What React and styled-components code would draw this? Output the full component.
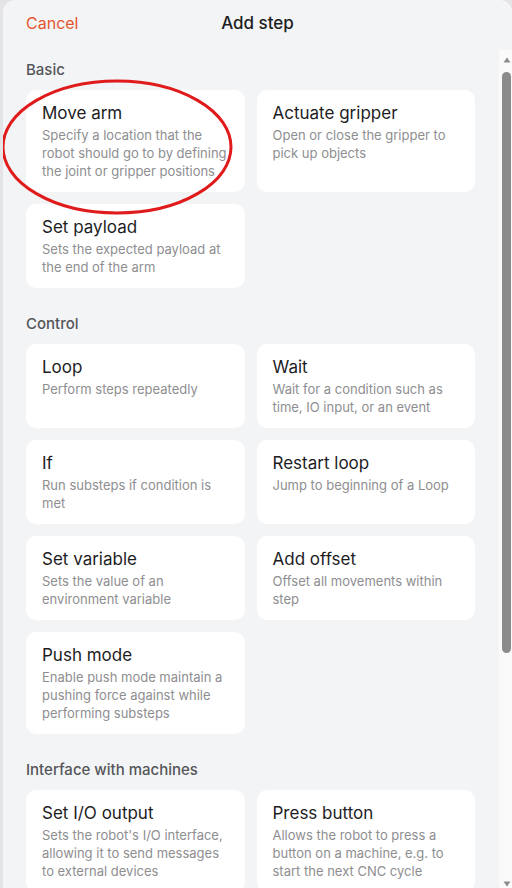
import styled, { createGlobalStyle } from 'styled-components';

const GlobalStyle = createGlobalStyle`
  * { box-sizing: border-box; }
  html, body { margin: 0; padding: 0; }
  body {
    background: #e4e4e6;
    font-family: Inter, "Noto Sans", sans-serif;
    -webkit-font-smoothing: antialiased;
  }
`;

const sections = [
  {
    label: 'Basic',
    steps: [
      { title: 'Move arm', text: 'Specify a location that the robot should go to by defining the joint or gripper positions' },
      { title: 'Actuate gripper', text: 'Open or close the gripper to pick up objects' },
      { title: 'Set payload', text: 'Sets the expected payload at the end of the arm' },
    ],
  },
  {
    label: 'Control',
    steps: [
      { title: 'Loop', text: 'Perform steps repeatedly' },
      { title: 'Wait', text: 'Wait for a condition such as time, IO input, or an event' },
      { title: 'If', text: 'Run substeps if condition is met' },
      { title: 'Restart loop', text: 'Jump to beginning of a Loop' },
      { title: 'Set variable', text: 'Sets the value of an environment variable' },
      { title: 'Add offset', text: 'Offset all movements within step' },
      { title: 'Push mode', text: 'Enable push mode maintain a pushing force against while performing substeps' },
    ],
  },
  {
    label: 'Interface with machines',
    steps: [
      { title: 'Set I/O output', text: "Sets the robot's I/O interface, allowing it to send messages to external devices" },
      { title: 'Press button', text: 'Allows the robot to press a button on a machine, e.g. to start the next CNC cycle' },
    ],
  },
];

function Scrollbar() {
  return (
    <Track>
      <Arrow viewBox='0 0 8 6' $dir='up'>
        <path d='M4 0.5 L7.5 5.5 L0.5 5.5 Z' fill='#8b8b8b' />
      </Arrow>
      <Thumb />
      <Arrow viewBox='0 0 8 6' $dir='down'>
        <path d='M0.5 0.5 L7.5 0.5 L4 5.5 Z' fill='#8b8b8b' />
      </Arrow>
    </Track>
  );
}

function Sheet() {
  return (
    <Panel>
      <Header>
        <CancelButton type='button'>Cancel</CancelButton>
        <Title>Add step</Title>
        <span />
      </Header>
      <BodyRow>
        <Scroller>
          {sections.map((section) => (
            <Section key={section.label}>
              <SectionLabel>{section.label}</SectionLabel>
              <Grid>
                {section.steps.map((step) => (
                  <Card key={step.title}>
                    <CardTitle>{step.title}</CardTitle>
                    <CardText>{step.text}</CardText>
                  </Card>
                ))}
              </Grid>
            </Section>
          ))}
        </Scroller>
        <Scrollbar />
      </BodyRow>
      <Highlight width='236' height='140' viewBox='0 0 236 140'>
        <ellipse cx='117' cy='69' rx='114' ry='66' fill='none' stroke='#e01b1b' strokeWidth='3' />
      </Highlight>
    </Panel>
  );
}

export default function App() {
  return (
    <>
      <GlobalStyle />
      <Page>
        <Sheet />
      </Page>
    </>
  );
}

const Page = styled.div`
  height: 888px;
  padding-left: 3px;
  overflow: hidden;
`;

const Panel = styled.div`
  position: relative;
  height: 888px;
  background: #f3f4f6;
  border-radius: 12px 12px 0 0;
  display: flex;
  flex-direction: column;
  overflow: hidden;
`;

const Header = styled.div`
  height: 50px;
  flex-shrink: 0;
  display: grid;
  grid-template-columns: 1fr auto 1fr;
  align-items: center;
  padding: 0 23px 4px 23px;
`;

const CancelButton = styled.button`
  justify-self: start;
  border: 0;
  background: none;
  padding: 0;
  font-family: inherit;
  font-size: 16px;
  color: #e4572e;
  cursor: pointer;
`;

const Title = styled.h1`
  margin: 0;
  font-size: 17px;
  font-weight: 500;
  color: #1e1e1e;
`;

const BodyRow = styled.div`
  flex: 1;
  min-height: 0;
  display: flex;
`;

const Scroller = styled.div`
  flex: 1;
  min-width: 0;
  overflow: hidden;
  padding: 10px 24px 40px 23px;
`;

const Track = styled.div`
  width: 13px;
  flex-shrink: 0;
  background: #fafafa;
  display: flex;
  flex-direction: column;
  align-items: center;
  padding: 7px 0 0 2px;
`;

const Arrow = styled.svg`
  width: 8px;
  height: 6px;
  flex-shrink: 0;
  margin-top: ${(p) => (p.$dir === 'down' ? 'auto' : '0')};
  margin-bottom: ${(p) => (p.$dir === 'down' ? '1px' : '0')};
`;

const Thumb = styled.div`
  width: 9px;
  height: 581px;
  margin-top: 9px;
  border-radius: 5px;
  background: #8b8b8b;
`;

const Section = styled.section`
  & + & {
    margin-top: 26px;
  }
`;

const SectionLabel = styled.h2`
  margin: 0 0 10px;
  font-size: 15px;
  line-height: 20px;
  font-weight: 500;
  color: #555659;
`;

const Grid = styled.div`
  display: grid;
  grid-template-columns: 1fr 1fr;
  gap: 12px;
`;

const Card = styled.button`
  display: flex;
  flex-direction: column;
  align-items: flex-start;
  text-align: left;
  border: 0;
  border-radius: 10px;
  background: #ffffff;
  padding: 12px 16px 12px;
  font-family: inherit;
  cursor: pointer;
`;

const CardTitle = styled.span`
  font-size: 17px;
  line-height: 22px;
  color: #1d1d1f;
`;

const CardText = styled.span`
  margin-top: 2px;
  font-size: 13px;
  line-height: 18px;
  color: #8e8e91;
`;

const Highlight = styled.svg`
  position: absolute;
  left: -3px;
  top: 78px;
  pointer-events: none;
`;
